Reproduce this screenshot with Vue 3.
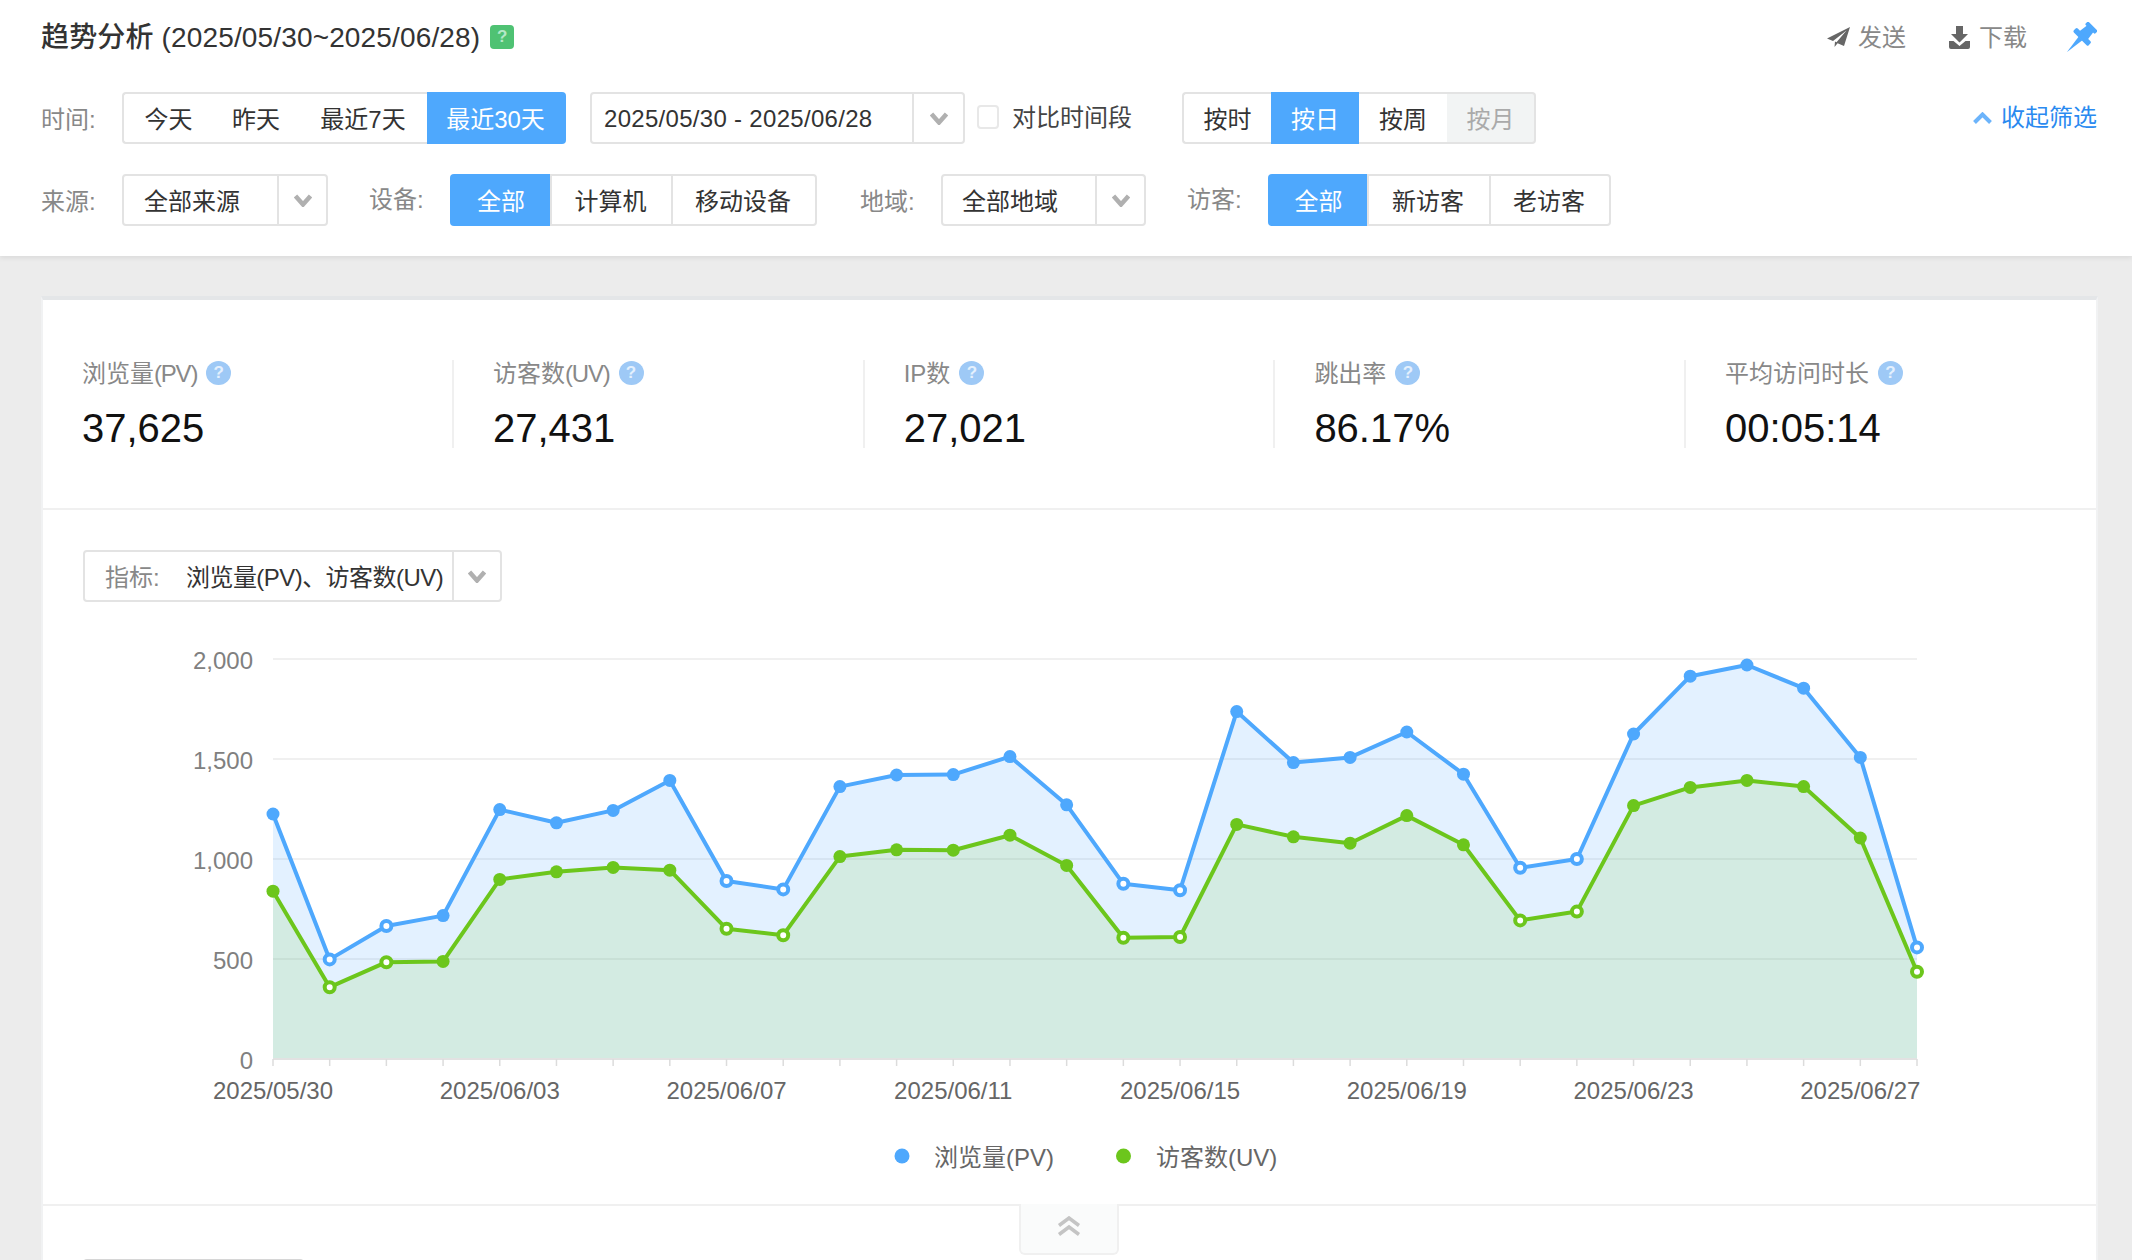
<template>
  <div class="page">
    <header class="filter-panel">
      <div class="title-row">
        <h1 class="title"><span class="title-name">趋势分析</span> (2025/05/30~2025/06/28)</h1>
        <span class="title-help">?</span>
        <div class="actions">
          <a class="action">
            <svg class="icon-send" viewBox="0 0 23 20"><path d="M23 0 L0 11.5 L6 14 L19.5 3.5 L9.5 15.2 L8 14.6 L7.5 20 L10.6 16.2 L17 19 Z" /></svg>
            <span class="action-text">发送</span>
          </a>
          <a class="action">
            <svg class="icon-download" viewBox="0 0 21 23">
              <path d="M7 0 h7 v8 h5 l-8.5 8.5 l-8.5 -8.5 h5 z" />
              <path d="M0 15 h4.5 l6 5 l6 -5 h4.5 v6 a2 2 0 0 1 -2 2 h-17 a2 2 0 0 1 -2 -2 z" />
            </svg>
            <span class="action-text">下载</span>
          </a>
          <svg class="icon-pin" viewBox="-15 -15 30 30">
            <g transform="rotate(45)">
              <rect x="-7" y="-15.5" width="14" height="4.5" rx="1.5" />
              <path d="M-4.5 -12 h9 l1.5 11 h-12 z" />
              <rect x="-10.5" y="-3" width="21" height="5.5" rx="1.5" />
              <path d="M-2.6 2 h5.2 l-2.6 19.5 z" />
            </g>
          </svg>
        </div>
      </div>

      <div class="filter-row">
        <span class="filter-label">时间:</span>
        <div class="seg seg-time">
          <button v-for="item in timeOptions" :key="item" class="seg-btn" :class="{ active: item === '最近30天' }">{{ item }}</button>
        </div>
        <div class="select select-date">
          <span class="select-text">2025/05/30 - 2025/06/28</span>
          <span class="select-arrow"><svg class="chevron" viewBox="0 0 18 13"><path d="M1.5 2 L9 10.5 L16.5 2" /></svg></span>
        </div>
        <span class="checkbox"></span>
        <span class="compare-text">对比时间段</span>
        <div class="seg seg-grain">
          <button class="seg-btn">按时</button>
          <button class="seg-btn active">按日</button>
          <button class="seg-btn">按周</button>
          <button class="seg-btn disabled">按月</button>
        </div>
        <a class="collapse">
          <svg class="collapse-icon" viewBox="0 0 19 12"><path d="M1.5 10.5 L9.5 2.5 L17.5 10.5" /></svg>
          <span class="collapse-text">收起筛选</span>
        </a>
      </div>

      <div class="filter-row">
        <span class="filter-label">来源:</span>
        <div class="select select-source">
          <span class="select-text">全部来源</span>
          <span class="select-arrow"><svg class="chevron" viewBox="0 0 18 13"><path d="M1.5 2 L9 10.5 L16.5 2" /></svg></span>
        </div>
        <span class="filter-label raised spaced">设备:</span>
        <div class="seg seg-divided seg-device">
          <button class="seg-btn active">全部</button>
          <button class="seg-btn">计算机</button>
          <button class="seg-btn">移动设备</button>
        </div>
        <span class="filter-label spaced region-label">地域:</span>
        <div class="select select-region">
          <span class="select-text">全部地域</span>
          <span class="select-arrow"><svg class="chevron" viewBox="0 0 18 13"><path d="M1.5 2 L9 10.5 L16.5 2" /></svg></span>
        </div>
        <span class="filter-label raised spaced">访客:</span>
        <div class="seg seg-divided seg-visitor">
          <button class="seg-btn active">全部</button>
          <button class="seg-btn">新访客</button>
          <button class="seg-btn">老访客</button>
        </div>
      </div>
    </header>

    <main class="card">
      <section class="stats">
        <div v-for="stat in stats" :key="stat.label" class="stat">
          <div class="stat-label">
            <span class="stat-name">{{ stat.label }}<span class="stat-unit">{{ stat.unit }}</span></span>
            <span class="help">?</span>
          </div>
          <div class="stat-value">{{ stat.value }}</div>
        </div>
      </section>

      <section class="chart-section">
        <div class="select select-metric">
          <span class="metric-label">指标:</span>
          <span class="metric-value">浏览量(PV)、访客数(UV)</span>
          <span class="select-arrow"><svg class="chevron" viewBox="0 0 18 13"><path d="M1.5 2 L9 10.5 L16.5 2" /></svg></span>
        </div>

        <!-- viewBox uses page coordinates so the scale below reads directly -->
        <svg class="chart" viewBox="43 602 2053 602">
          <line v-for="v in yTicks" :key="v" x1="273" x2="1917" :y1="yOf(v)" :y2="yOf(v)" class="grid" />
          <text v-for="v in yTicks" :key="'y' + v" x="253" :y="yOf(v) + 9.5" class="y-label">{{ v.toLocaleString('en-US') }}</text>

          <path :d="areaPath(pv)" class="area-pv" />
          <path :d="areaPath(uv)" class="area-uv" />

          <line x1="273" x2="1917" y1="1059" y2="1059" class="axis" />
          <line v-for="(v, i) in pv" :key="'t' + i" :x1="xOf(i)" :x2="xOf(i)" y1="1059" y2="1066" class="tick" />
          <text v-for="label in xLabels" :key="label.text" :x="xOf(label.index)" y="1099" class="x-label">{{ label.text }}</text>

          <polyline :points="linePoints(pv)" class="line-pv" />
          <polyline :points="linePoints(uv)" class="line-uv" />

          <circle
            v-for="(v, i) in pv"
            :key="'p' + i"
            :cx="xOf(i)"
            :cy="yOf(v)"
            :r="isWeekend(i) ? 5 : 6.5"
            class="dot-pv"
            :class="{ hollow: isWeekend(i) }"
          />
          <circle
            v-for="(v, i) in uv"
            :key="'u' + i"
            :cx="xOf(i)"
            :cy="yOf(v)"
            :r="isWeekend(i) ? 5 : 6.5"
            class="dot-uv"
            :class="{ hollow: isWeekend(i) }"
          />

          <circle cx="902" cy="1156" r="7.5" class="legend-pv" />
          <text x="934" y="1166" class="legend-text">浏览量(PV)</text>
          <circle cx="1123.5" cy="1156" r="7.5" class="legend-uv" />
          <text x="1156" y="1166" class="legend-text">访客数(UV)</text>
        </svg>
      </section>

      <section class="below">
        <div class="fold-tab">
          <svg class="fold-icon" viewBox="0 0 24 20"><path d="M2 9.5 L12 2 L22 9.5 M2 18.5 L12 11 L22 18.5" /></svg>
        </div>
        <div class="below-head"></div>
      </section>
    </main>
  </div>
</template>

<script setup>
const timeOptions = ['今天', '昨天', '最近7天', '最近30天']

const stats = [
  { label: '浏览量', unit: '(PV)', value: '37,625' },
  { label: '访客数', unit: '(UV)', value: '27,431' },
  { label: 'IP数', unit: '', value: '27,021' },
  { label: '跳出率', unit: '', value: '86.17%' },
  { label: '平均访问时长', unit: '', value: '00:05:14' }
]

const pv = [1225, 498, 665, 717, 1247, 1181, 1243, 1393, 890, 848, 1362, 1420, 1422, 1512, 1271, 876, 844, 1737, 1482, 1508, 1635, 1424, 956, 1000, 1625, 1914, 1970, 1854, 1508, 558]
const uv = [839, 359, 484, 488, 898, 936, 958, 944, 651, 619, 1012, 1046, 1044, 1119, 968, 606, 610, 1173, 1111, 1079, 1217, 1071, 693, 737, 1267, 1358, 1393, 1362, 1105, 436]

const yTicks = [0, 500, 1000, 1500, 2000]

const xLabels = [
  { index: 0, text: '2025/05/30' },
  { index: 4, text: '2025/06/03' },
  { index: 8, text: '2025/06/07' },
  { index: 12, text: '2025/06/11' },
  { index: 16, text: '2025/06/15' },
  { index: 20, text: '2025/06/19' },
  { index: 24, text: '2025/06/23' },
  { index: 28, text: '2025/06/27' }
]

const xOf = (i) => 273 + (i * (1917 - 273)) / 29
const yOf = (v) => 1059 - v * 0.2

// 5/31 and 6/1 are the first weekend, every point on a weekend is hollow
const isWeekend = (i) => i === 29 || i % 7 === 1 || i % 7 === 2

const linePoints = (data) => data.map((v, i) => `${xOf(i)},${yOf(v)}`).join(' ')
const areaPath = (data) => `M273,1059 L${linePoints(data).replaceAll(' ', ' L')} L1917,1059 Z`
</script>

<style>
html,
body {
  margin: 0;
  background: #ececec;
}
</style>

<style scoped>
.page {
  width: 2132px;
  height: 1260px;
  overflow: hidden;
  background: #ececec;
  font-family: "Liberation Sans", "Noto Sans CJK SC", sans-serif;
  font-size: 24px;
  color: #333;
}

.filter-panel {
  height: 256px;
  padding: 14px 35px 0 41px;
  box-sizing: border-box;
  background: #fff;
  box-shadow: 0 2px 5px rgba(0, 0, 0, 0.08);
}

.title-row {
  display: flex;
  align-items: center;
  height: 46px;
  margin-bottom: 32px;
}

.title {
  margin: 0 0 4px;
  font-size: 28px;
  font-weight: 400;
  letter-spacing: 0.15px;
  color: #333;
}

.title-name {
  font-weight: 500;
}

.title-help {
  width: 24px;
  height: 24px;
  margin-left: 10px;
  border-radius: 4px;
  background: #4fc273;
  color: #b5e8c8;
  font-size: 17px;
  font-weight: 700;
  line-height: 24px;
  text-align: center;
}

.actions {
  display: flex;
  align-items: center;
  margin-left: auto;
}

.action {
  display: flex;
  align-items: center;
  margin-right: 40px;
  color: #888;
}

.action:first-child {
  margin-right: 43px;
}

.action-text {
  margin-bottom: 3px;
}

.icon-send {
  width: 23px;
  height: 20px;
  margin-right: 8px;
  fill: #666;
}

.icon-download {
  width: 21px;
  height: 23px;
  margin-right: 9px;
  fill: #666;
}

.icon-pin {
  width: 30px;
  height: 30px;
  fill: #4ea8fd;
}

.filter-row {
  display: flex;
  align-items: center;
  height: 52px;
  margin-bottom: 30px;
}

.filter-label {
  width: 56px;
  margin-right: 25px;
  margin-bottom: 2px;
  color: #888;
  white-space: nowrap;
}

.filter-label.spaced {
  margin-left: 41px;
}

.filter-label.region-label {
  margin-left: 43px;
}

.filter-label.raised {
  margin-bottom: 5px;
}

.seg {
  display: flex;
  height: 52px;
}

.seg-btn {
  height: 52px;
  padding: 0 0 2px;
  box-sizing: border-box;
  border: solid #e3e3e3;
  border-width: 2px 0;
  background: #fff;
  color: #333;
  font: inherit;
}

.seg-btn:first-child {
  border-left-width: 2px;
  border-radius: 4px 0 0 4px;
}

.seg-btn:last-child {
  border-right-width: 2px;
  border-radius: 0 4px 4px 0;
}

.seg-divided .seg-btn + .seg-btn {
  padding-right: 2px;
  border-left-width: 2px;
}

.seg-btn.active {
  border-color: #4ea8fd;
  background: #4ea8fd;
  color: #fff;
}

.seg-btn.disabled {
  background: #f2f4f4;
  color: #aaa;
}

.seg-time .seg-btn:nth-child(1) { width: 91px; }
.seg-time .seg-btn:nth-child(2) { width: 86px; }
.seg-time .seg-btn:nth-child(3) { width: 128px; }
.seg-time .seg-btn:nth-child(4) { width: 139px; }

.seg-grain {
  margin-left: 50px;
}

.seg-grain .seg-btn:nth-child(1) { width: 89px; }
.seg-grain .seg-btn:nth-child(2) { width: 88px; }
.seg-grain .seg-btn:nth-child(3) { width: 88px; }
.seg-grain .seg-btn:nth-child(4) { width: 89px; }

.seg-device .seg-btn:nth-child(1) { width: 100px; }
.seg-device .seg-btn:nth-child(2) { width: 121px; }
.seg-device .seg-btn:nth-child(3) { width: 146px; }

.seg-visitor .seg-btn:nth-child(1) { width: 99px; }
.seg-visitor .seg-btn:nth-child(2) { width: 122px; }
.seg-visitor .seg-btn:nth-child(3) { width: 122px; }

.select {
  display: flex;
  align-items: center;
  height: 52px;
  box-sizing: border-box;
  border: 2px solid #e3e3e3;
  border-radius: 4px;
  background: #fff;
  white-space: nowrap;
}

.select-text {
  flex: 1;
  margin-bottom: 2px;
}

.select-arrow {
  display: flex;
  align-items: center;
  justify-content: center;
  width: 49px;
  height: 100%;
  box-sizing: border-box;
  border-left: 2px solid #e3e3e3;
  margin-left: auto;
}

.chevron {
  width: 18px;
  height: 13px;
  fill: none;
  stroke: #b0b0b0;
  stroke-width: 4.5;
}

.select-date {
  width: 375px;
  margin-left: 24px;
  padding-left: 12px;
}

.select-date .select-text {
  margin: 2px 0 0;
  letter-spacing: 0.3px;
}

.select-date .select-arrow {
  width: 51px;
}

.select-source {
  width: 206px;
  padding-left: 20px;
}

.select-region {
  width: 205px;
  padding-left: 19px;
}

.checkbox {
  width: 22px;
  height: 24px;
  margin-left: 12px;
  margin-bottom: 2px;
  box-sizing: border-box;
  border: 2px solid #e8e8e8;
  border-radius: 4px;
}

.compare-text {
  margin-left: 13px;
  margin-bottom: 6px;
  color: #444;
}

.collapse {
  display: flex;
  align-items: center;
  margin-left: auto;
  color: #2a8af0;
}

.collapse-text {
  margin-bottom: 6px;
}

.collapse-icon {
  width: 19px;
  height: 12px;
  margin-right: 9px;
  fill: none;
  stroke: #6cb4fb;
  stroke-width: 4;
}

.card {
  height: 1100px;
  margin: 40px 34px 0 41px;
  box-sizing: border-box;
  border: solid #f1f2f3;
  border-top-color: #e4e6e8;
  border-width: 4px 2px 0;
  background: #fff;
}

.stats {
  display: flex;
  padding: 60px 0 60px 39px;
  border-bottom: 2px solid #f0f0f0;
}

.stat {
  width: 410.7px;
  height: 88px;
  padding-left: 39px;
  box-sizing: border-box;
  border-left: 2px solid #f0f0f0;
}

.stat:first-child {
  width: 370px;
  padding-left: 0;
  border-left: none;
}

.stat-label {
  display: flex;
  align-items: center;
  height: 26px;
  color: #888;
  white-space: nowrap;
}

.stat-name {
  margin-bottom: 3px;
}

.stat-unit {
  letter-spacing: -1.2px;
}

.help {
  width: 25px;
  height: 24px;
  margin-left: 9px;
  border-radius: 50%;
  background: #9ec9f6;
  color: #e4f0fd;
  font-size: 17px;
  font-weight: 700;
  line-height: 24px;
  text-align: center;
}

.stat-value {
  margin-top: 18px;
  font-size: 40px;
  line-height: 48px;
  color: #111;
}

.chart-section {
  padding-top: 40px;
}

.select-metric {
  width: 419px;
  margin-left: 40px;
  padding-left: 20px;
  color: #333;
}

.metric-label {
  width: 81px;
  flex: none;
  margin-bottom: 2px;
  color: #888;
}

.metric-value {
  flex: none;
  margin-bottom: 2px;
  letter-spacing: -0.55px;
}

.select-metric .select-arrow {
  width: 48px;
}

.chart {
  display: block;
  width: 2053px;
  height: 602px;
}

.grid {
  stroke: #f0f0f0;
  stroke-width: 2;
}

.axis {
  stroke: #e2e2e2;
  stroke-width: 2;
}

.tick {
  stroke: #dcdcdc;
  stroke-width: 1.5;
}

.y-label {
  font-size: 24px;
  text-anchor: end;
  fill: #808080;
}

.x-label {
  font-size: 24px;
  text-anchor: middle;
  fill: #666;
}

.area-pv {
  fill: #4ea8fd;
  fill-opacity: 0.16;
}

.area-uv {
  fill: #6cc61c;
  fill-opacity: 0.13;
}

.line-pv,
.line-uv {
  fill: none;
  stroke-width: 4;
  stroke-linejoin: round;
}

.line-pv {
  stroke: #4ea8fd;
}

.line-uv {
  stroke: #6cc61c;
}

.dot-pv {
  fill: #4ea8fd;
  stroke: #4ea8fd;
  stroke-width: 0;
}

.dot-uv {
  fill: #6cc61c;
  stroke: #6cc61c;
  stroke-width: 0;
}

.dot-pv.hollow,
.dot-uv.hollow {
  fill: #fff;
  stroke-width: 4;
}

.legend-pv {
  fill: #4ea8fd;
}

.legend-uv {
  fill: #6cc61c;
}

.legend-text {
  font-size: 24px;
  fill: #666;
}

.below {
  position: relative;
  padding: 53px 0 0 40px;
  border-top: 2px solid #f0f0f0;
}

.fold-tab {
  position: absolute;
  top: -2px;
  left: 976px;
  display: flex;
  align-items: center;
  justify-content: center;
  width: 100px;
  height: 51px;
  padding-bottom: 6px;
  box-sizing: border-box;
  border: 2px solid #f0f0f0;
  border-top: none;
  border-radius: 0 0 6px 6px;
  background: #fafbfb;
}

.fold-icon {
  width: 24px;
  height: 20px;
  fill: none;
  stroke: #c4c4c4;
  stroke-width: 3.5;
}

.below-head {
  width: 221px;
  height: 40px;
  border-top: 2px solid #d6d6d6;
  border-radius: 4px 4px 0 0;
}
</style>
